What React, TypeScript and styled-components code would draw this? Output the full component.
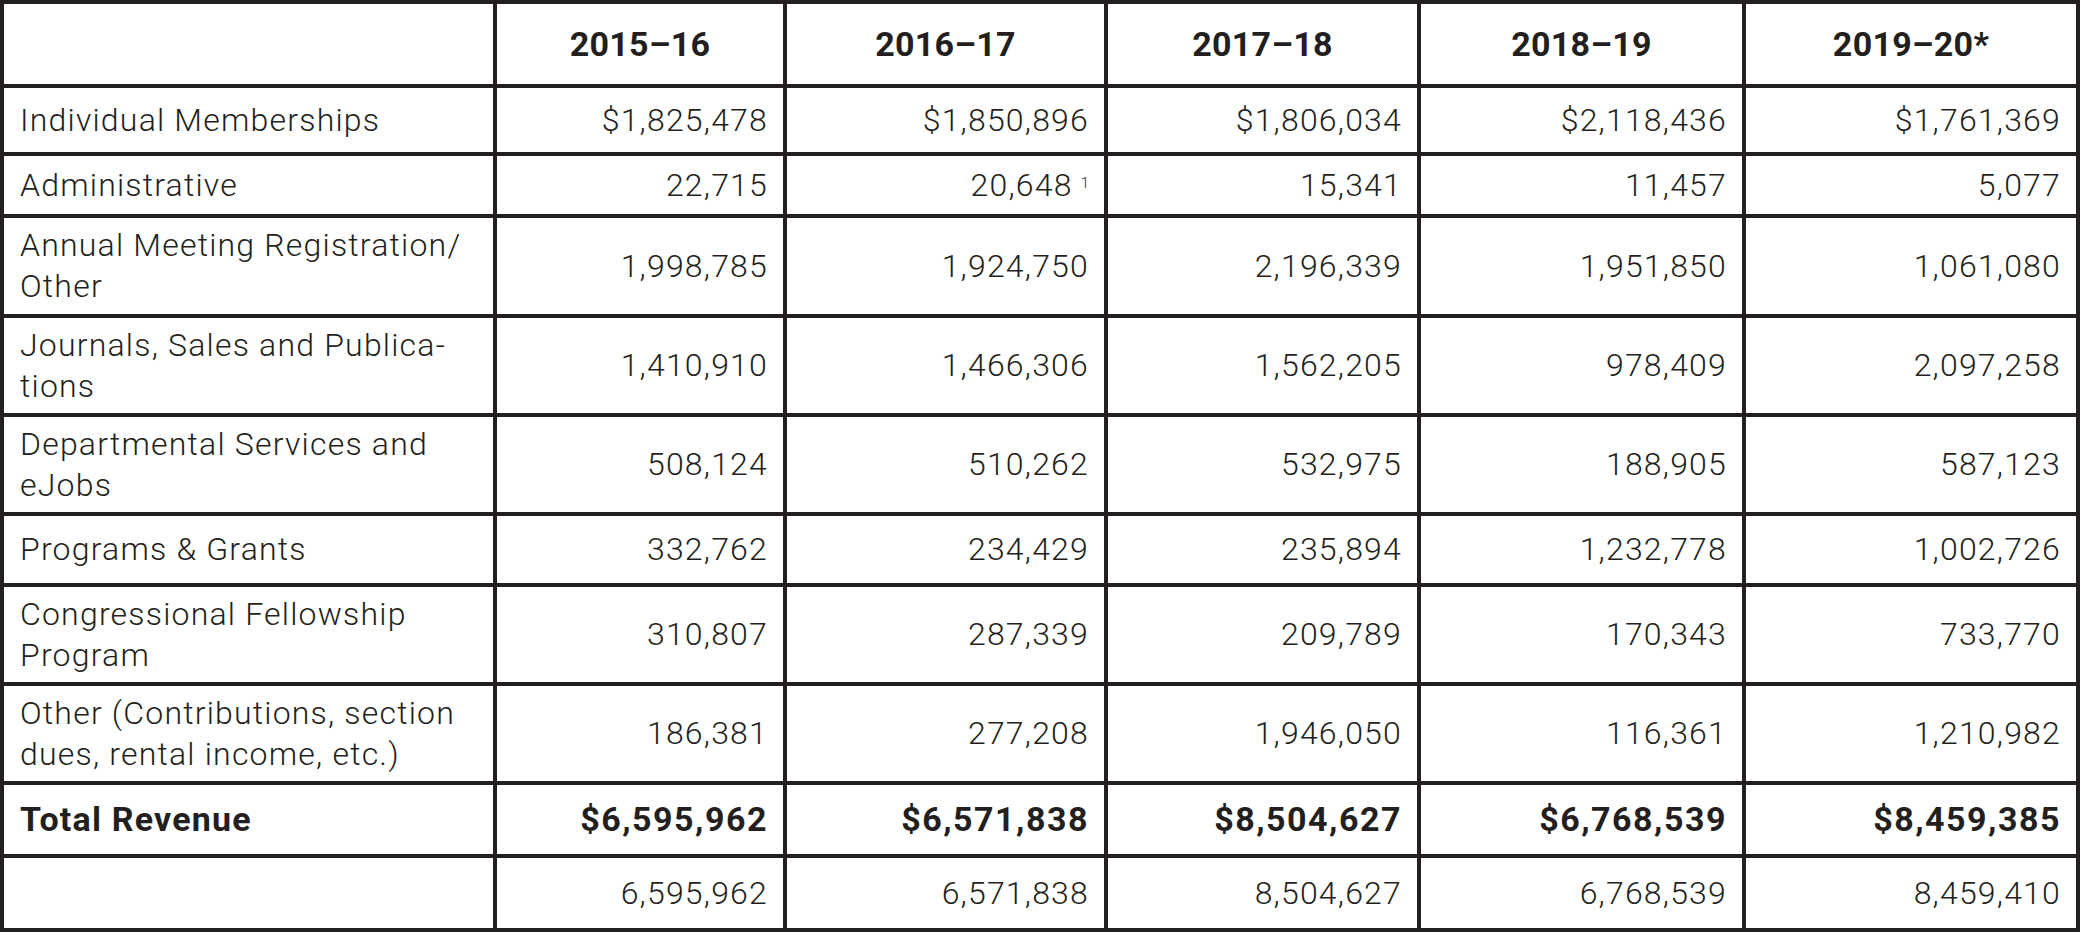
import styled, { createGlobalStyle } from "styled-components";

const GlobalStyle = createGlobalStyle`
  html, body {
    margin: 0;
    padding: 0;
    background: #ffffff;
  }
  body {
    font-family: Roboto, "Liberation Sans", sans-serif;
    color: #231f20;
  }
`;

interface Row {
  label: string[];
  values: string[];
  note?: number;
  bold?: boolean;
  height: number;
}

const years = ["2015–16", "2016–17", "2017–18", "2018–19", "2019–20*"];

const rows: Row[] = [
  {
    label: ["Individual Memberships"],
    values: ["$1,825,478", "$1,850,896", "$1,806,034", "$2,118,436", "$1,761,369"],
    height: 64,
  },
  {
    label: ["Administrative"],
    values: ["22,715", "20,648", "15,341", "11,457", "5,077"],
    note: 1,
    height: 58,
  },
  {
    label: ["Annual Meeting Registration/", "Other"],
    values: ["1,998,785", "1,924,750", "2,196,339", "1,951,850", "1,061,080"],
    height: 96,
  },
  {
    label: ["Journals, Sales and Publica-", "tions"],
    values: ["1,410,910", "1,466,306", "1,562,205", "978,409", "2,097,258"],
    height: 95,
  },
  {
    label: ["Departmental Services and", "eJobs"],
    values: ["508,124", "510,262", "532,975", "188,905", "587,123"],
    height: 95,
  },
  {
    label: ["Programs & Grants"],
    values: ["332,762", "234,429", "235,894", "1,232,778", "1,002,726"],
    height: 67,
  },
  {
    label: ["Congressional Fellowship", "Program"],
    values: ["310,807", "287,339", "209,789", "170,343", "733,770"],
    height: 95,
  },
  {
    label: ["Other (Contributions, section", "dues, rental income, etc.)"],
    values: ["186,381", "277,208", "1,946,050", "116,361", "1,210,982"],
    height: 95,
  },
  {
    label: ["Total Revenue"],
    values: ["$6,595,962", "$6,571,838", "$8,504,627", "$6,768,539", "$8,459,385"],
    bold: true,
    height: 69,
  },
  {
    label: [],
    values: ["6,595,962", "6,571,838", "8,504,627", "6,768,539", "8,459,410"],
    height: 70,
  },
];

const Table = styled.div<{ $rows: string }>`
  display: grid;
  grid-template-columns: 489px 286px 317px 309px 321px 330px;
  grid-template-rows: ${(p) => p.$rows};
  gap: 4px;
  padding: 4px;
  width: 2080px;
  box-sizing: border-box;
  background: #231f20;
`;

const Cell = styled.div`
  background: #ffffff;
  display: flex;
  align-items: center;
  font-size: 32px;
  font-weight: 300;
  line-height: 41px;
  letter-spacing: 1.2px;
  white-space: nowrap;
`;

const HeadCell = styled(Cell)`
  justify-content: center;
  font-size: 34px;
  font-weight: 700;
  letter-spacing: 0.3px;
`;

const LabelCell = styled(Cell)<{ $bold?: boolean }>`
  padding-left: 16px;
  font-weight: ${(p) => (p.$bold ? 700 : 300)};
  font-size: ${(p) => (p.$bold ? "34px" : "32px")};
  letter-spacing: ${(p) => (p.$bold ? "1.2px" : "1.2px")};
`;

const NumCell = styled(Cell)<{ $bold?: boolean }>`
  justify-content: flex-end;
  padding-right: 15px;
  font-weight: ${(p) => (p.$bold ? 700 : 300)};
  font-size: ${(p) => (p.$bold ? "34px" : "32px")};
  letter-spacing: ${(p) => (p.$bold ? "1.5px" : "1.2px")};
`;

const Note = styled.sup`
  font-size: 15px;
  line-height: 0;
  margin-left: 8px;
  letter-spacing: 0;
  position: relative;
  top: -2px;
`;

export default function App() {
  const template = [80, ...rows.map((r) => r.height)].map((h) => `${h}px`).join(" ");
  return (
    <>
      <GlobalStyle />
      <Table $rows={template}>
        <HeadCell />
        {years.map((y) => (
          <HeadCell key={y}>{y}</HeadCell>
        ))}
        {rows.map((row, i) => (
          <>
            <LabelCell key={`l${i}`} $bold={row.bold}>
              <span>
                {row.label.map((line, j) => (
                  <span key={j}>
                    {j > 0 && <br />}
                    {line}
                  </span>
                ))}
              </span>
            </LabelCell>
            {row.values.map((v, j) => (
              <NumCell key={`v${i}-${j}`} $bold={row.bold}>
                {v}
                {row.note && j === 1 && <Note>{row.note}</Note>}
              </NumCell>
            ))}
          </>
        ))}
      </Table>
    </>
  );
}
